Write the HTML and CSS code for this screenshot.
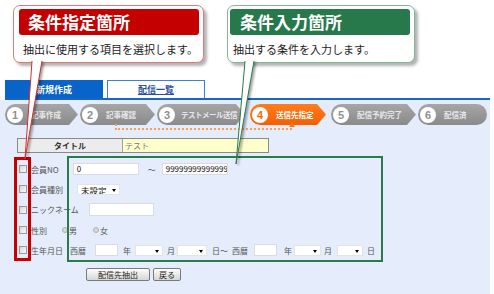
FILE: index.html
```html
<!DOCTYPE html>
<html lang="ja">
<head>
    <meta charset="UTF-8">
    <meta name="viewport" content="width=device-width, initial-scale=1.0">
    <title>配信先指定</title>
    <link rel="stylesheet" href="styles.css">
</head>
<body>
<div class="page">
    <div class="notes">
        <div class="note note-red">
            <div class="note-head">条件指定箇所</div>
            <p class="note-text">抽出に使用する項目を選択します。</p>
        </div>
        <div class="note note-green">
            <div class="note-head">条件入力箇所</div>
            <p class="note-text">抽出する条件を入力します。</p>
        </div>
    </div>

    <div class="tabs">
        <div class="tab tab-active">新規作成</div>
        <div class="tab"><a href="#">配信一覧</a></div>
    </div>

    <div class="content">
        <div class="steps">
            <div class="step"><span class="num">1</span>記事作成</div>
            <div class="step"><span class="num">2</span>記事確認</div>
            <div class="step step-long"><span class="num">3</span>テストメール送信</div>
            <div class="step step-active"><span class="num">4</span>送信先指定</div>
            <div class="step"><span class="num">5</span>配信予約完了</div>
            <div class="step step-last"><span class="num">6</span>配信済</div>
        </div>
        <div class="back-line"></div>

        <div class="title-row">
            <div class="title-label">タイトル</div>
            <div class="title-value">テスト</div>
        </div>

        <div class="form">
            <div class="row">
                <span class="cb"></span><span class="label">会員NO</span>
                <span class="field no-from">0</span>
                <span class="tilde">〜</span>
                <span class="field no-to">99999999999999</span>
            </div>
            <div class="row">
                <span class="cb"></span><span class="label">会員種別</span>
                <span class="select kind">未設定<i class="caret"></i></span>
            </div>
            <div class="row">
                <span class="cb"></span><span class="label">ニックネーム</span>
                <span class="field nick"></span>
            </div>
            <div class="row">
                <span class="cb"></span><span class="label">性別</span>
                <span class="radio r-male"></span><span class="label">男</span>
                <span class="radio r-female"></span><span class="label">女</span>
            </div>
            <div class="row">
                <span class="cb"></span><span class="label">生年月日</span>
                <span class="label era1">西暦</span>
                <span class="field year y1"></span>
                <span class="label d-year">年</span>
                <span class="select s-month"><i class="caret"></i></span>
                <span class="label d-month">月</span>
                <span class="select s-day"><i class="caret"></i></span>
                <span class="label d-day">日</span>
                <span class="label">〜</span>
                <span class="label era2">西暦</span>
                <span class="field year y2"></span>
                <span class="label d-year2">年</span>
                <span class="select s-month2"><i class="caret"></i></span>
                <span class="label d-month2">月</span>
                <span class="select s-day2"><i class="caret"></i></span>
                <span class="label d-day2">日</span>
            </div>
        </div>

        <div class="buttons">
            <button class="btn">配信先抽出</button>
            <button class="btn btn-small">戻る</button>
        </div>
    </div>

    <div class="mark mark-red"></div>
    <div class="mark mark-green"></div>

    <svg class="tails" width="494" height="294" viewBox="0 0 494 294">
        <path class="tail-red" d="M32 61 L25 159 L42 61"/>
        <path class="tail-green" d="M245 61 L236 164 L254 61"/>
    </svg>
</div>
</body>
</html>
```

FILE: styles.css
```css
body {
    margin: 0;
    background-color: #fff;
    font-family: "Noto Sans CJK JP", "Noto Sans", sans-serif;
}
.page {
    position: relative;
    width: 494px;
    height: 294px;
    overflow: hidden;
}

/* callouts */
.notes {
    display: flex;
    gap: 23px;
    height: 75px;
    padding: 5px 0 0 13px;
}
.note {
    box-sizing: border-box;
    width: 191px;
    height: 58px;
    padding: 3px 4px 0 5px;
    background-color: #fff;
    border: 1px solid #e07a7a;
    border-radius: 7px;
    box-shadow: 3px 3px 3px rgba(0, 0, 0, 0.3);
}
.note-head {
    height: 26px;
    padding-left: 9px;
    border-radius: 3px;
    background-color: #c40000;
    color: #fff;
    font-size: 17px;
    font-weight: bold;
    line-height: 26px;
}
.note-text {
    margin: 7px 0 0 4px;
    font-size: 11px;
    line-height: 14px;
    color: #222;
}
.note-green {
    width: 188px;
    padding-left: 2px;
    border-color: #80b898;
}
.note-green .note-head {
    padding-left: 10px;
    background-color: #27784b;
}
.note-green .note-text {
    margin-left: 3px;
}

/* tabs */
.tabs {
    display: flex;
    gap: 4px;
    width: 485px;
    height: 18px;
    margin-left: 5px;
    border-bottom: 2px solid #1866c6;
}
.tab {
    box-sizing: border-box;
    width: 98px;
    height: 18px;
    text-align: center;
    font-size: 9px;
    font-weight: bold;
    line-height: 18px;
    background-color: #fff;
    border: 1px solid #3c82d2;
    border-bottom: none;
}
.tab a {
    color: #2a4ea8;
}
.tab-active {
    background-color: #0864c8;
    border-color: #0864c8;
    color: #fff;
}

/* content */
.content {
    box-sizing: border-box;
    width: 490px;
    height: 194px;
    padding-top: 4px;
    background-color: #e5edfc;
}
.steps {
    display: flex;
    height: 21px;
    margin-left: 5px;
}
.step {
    box-sizing: border-box;
    display: flex;
    align-items: center;
    height: 21px;
    padding-left: 2px;
    margin-left: 2px;
    background: linear-gradient(#a6a6a6, #8a8a8a);
    border-radius: 11px 0 0 11px;
    clip-path: polygon(0 0, calc(100% - 9px) 0, 100% 50%, calc(100% - 9px) 100%, 0 100%);
    color: #e8e8e8;
    font-size: 7.5px;
    font-weight: bold;
    white-space: nowrap;
}
.step:nth-child(1) { width: 73px; margin-left: 0; }
.step:nth-child(2) { width: 75px; }
.step:nth-child(3) { width: 88px; }
.step:nth-child(4) { width: 76px; margin-left: 5px; }
.step:nth-child(5) { width: 85px; margin-left: 5px; }
.step:nth-child(6) { width: 69px; }
.step-long {
    letter-spacing: -0.5px;
}
.num {
    display: flex;
    align-items: center;
    justify-content: center;
    width: 16px;
    height: 16px;
    margin-right: 8px;
    border-radius: 50%;
    background-color: #fff;
    color: #909090;
    font-family: "Liberation Sans", sans-serif;
    font-size: 11px;
    font-weight: bold;
    letter-spacing: 0;
}
.step-long .num {
    margin-right: 6px;
}
.step-active {
    background: linear-gradient(#ff7d1e, #f45f00);
    color: #fff;
}
.step-active .num {
    color: #ff6600;
}
.step-last {
    border-radius: 11px;
    clip-path: none;
}
.back-line {
    position: relative;
    box-sizing: border-box;
    width: 177px;
    height: 6px;
    margin: -1px 0 0 115px;
    border-left: 2px dotted #f5a052;
    border-bottom: 2px dotted #f5a052;
}
.back-line::after {
    content: "";
    position: absolute;
    right: -3px;
    top: -2px;
    border-bottom: 5px solid #f07818;
    border-left: 3px solid transparent;
    border-right: 3px solid transparent;
}

.title-row {
    box-sizing: border-box;
    display: flex;
    width: 252px;
    height: 15px;
    margin: 8px 0 0 17px;
    border: 1px solid #8a8a8a;
    font-size: 8px;
    line-height: 13px;
}
.title-label {
    width: 104px;
    text-align: center;
    font-weight: bold;
    color: #333;
    background-color: #ececec;
    border-right: 1px solid #a0a0a0;
}
.title-value {
    flex: 1;
    padding-left: 2px;
    color: #777;
    background-color: #ffffcc;
}

/* form rows */
.form {
    margin-top: 6px;
}
.row {
    display: flex;
    align-items: center;
    height: 20.3px;
    padding-left: 19px;
    font-size: 8px;
}
.cb {
    box-sizing: border-box;
    width: 8px;
    height: 8px;
    margin-right: 4px;
    border: 1px solid #9a9a9a;
    background: linear-gradient(135deg, #d6d6d6, #fafafa);
}
.label {
    color: #555;
    white-space: nowrap;
}
.field, .select {
    box-sizing: border-box;
    display: block;
    height: 12px;
    padding-left: 3px;
    background-color: #fff;
    border: 1px solid #dcdcdc;
    color: #111;
    font-size: 8px;
    line-height: 10px;
    overflow: hidden;
    white-space: nowrap;
}
.select {
    position: relative;
    height: 11px;
    border-color: #e4e4e4;
}
.caret {
    position: absolute;
    right: 3px;
    top: 4px;
    border-top: 3px solid #000;
    border-left: 2.5px solid transparent;
    border-right: 2.5px solid transparent;
}
.no-from { width: 66px; margin-left: 14px; }
.tilde { margin: 0 6px 0 9px; color: #555; }
.no-to { width: 66px; }
.kind { width: 43px; margin-left: 14px; font-size: 8.5px; }
.nick { width: 65px; height: 13px; margin-left: 10px; }
.radio {
    box-sizing: border-box;
    width: 6px;
    height: 6px;
    margin-right: 1px;
    border-radius: 50%;
    border: 1px solid #b0b0b0;
    background-color: #d8d8d8;
}
.r-male { margin-left: 15px; }
.r-female { margin-left: 16px; }
.era1 { margin-left: 7px; }
.year { width: 23px; }
.y1 { margin-left: 9px; }
.d-year { margin-left: 5px; }
.s-month { width: 28px; margin-left: 4px; }
.d-month { margin-left: 4px; }
.s-day { width: 30px; margin-left: 2px; }
.d-day { margin-left: 5px; }
.era2 { margin-left: 4px; }
.y2 { margin-left: 6px; }
.d-year2 { margin-left: 7px; }
.s-month2 { width: 27px; margin-left: 2px; }
.d-month2 { margin-left: 3px; }
.s-day2 { width: 26px; margin-left: 5px; }
.d-day2 { margin-left: 4px; }

.buttons {
    display: flex;
    gap: 3px;
    margin: 8px 0 0 86px;
}
.btn {
    box-sizing: border-box;
    height: 13px;
    padding: 0 11px;
    border: 1px solid #7a7a7a;
    border-radius: 2px;
    background: linear-gradient(#fdfdfd, #d6d6d6);
    color: #222;
    font-family: "Noto Sans CJK JP", sans-serif;
    font-size: 8px;
    line-height: 11px;
}
.btn-small {
    padding: 0 5px;
}

/* annotations drawn over the page */
.mark {
    position: absolute;
    box-sizing: border-box;
}
.mark-red {
    left: 14px;
    top: 157px;
    width: 17px;
    height: 104px;
    border: 3px solid #c80000;
}
.mark-green {
    left: 67px;
    top: 156px;
    width: 316px;
    height: 106px;
    border: 2px solid #2a7a4c;
}
.tails {
    position: absolute;
    left: 0;
    top: 0;
    pointer-events: none;
}
.tails path {
    fill: #fff;
    stroke-width: 1;
    filter: drop-shadow(2px 1px 1px rgba(0, 0, 0, 0.35));
}
.tail-red {
    stroke: #d52a2a;
}
.tail-green {
    stroke: #2a7a4c;
}
```
